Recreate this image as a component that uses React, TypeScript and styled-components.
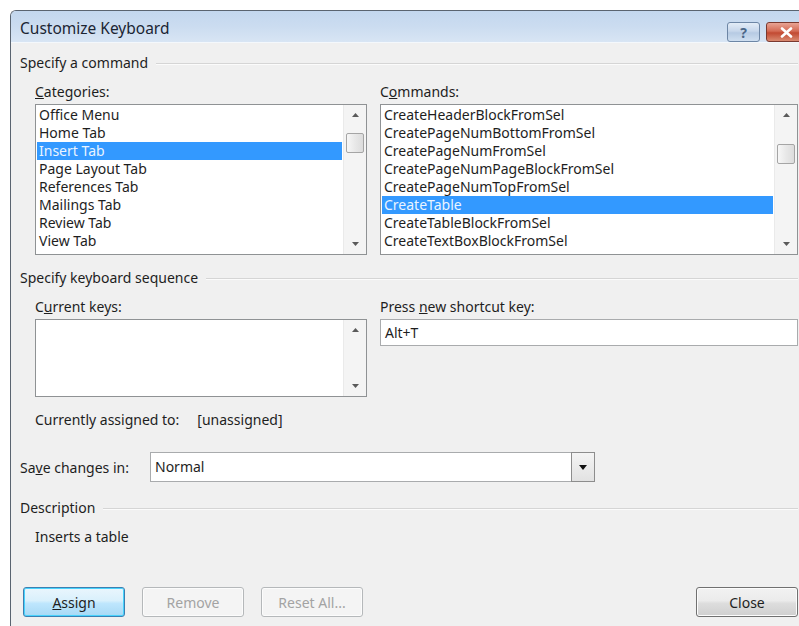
import React from 'react';
import styled, { createGlobalStyle } from 'styled-components';

const GlobalStyle = createGlobalStyle`
  html, body {
    margin: 0;
    padding: 0;
    background: #ffffff;
    overflow: hidden;
  }
  body {
    font-family: "Noto Sans", "Open Sans", sans-serif;
    font-size: 14px;
    color: #1e1e1e;
  }
`;

const Page = styled.div`
  width: 799px;
  height: 626px;
  padding: 10px 0 0 10px;
  box-sizing: border-box;
  overflow: hidden;
`;

const Window = styled.div`
  width: 830px;
  height: 640px;
  border-left: 1px solid #5a6470;
  border-top: 1px solid #5a6470;
  border-top-left-radius: 6px;
  background: #f0f0f0;
  display: flex;
  flex-direction: column;
  overflow: hidden;
`;

const TitleBar = styled.div`
  height: 31px;
  display: flex;
  align-items: center;
  padding-left: 9px;
  background: linear-gradient(to bottom, #c3d7ee 0%, #cbdcf0 50%, #d8e5f4 100%);
  border-bottom: 1px solid #f4f8fc;
  position: relative;
`;

const TitleText = styled.span`
  font-size: 15.5px;
  color: #1b2533;
  padding-top: 2px;
`;

const TitleButtons = styled.div`
  position: absolute;
  left: 716px;
  top: 11px;
  display: flex;
  gap: 6px;
`;

const CaptionButton = styled.div<{ $danger?: boolean }>`
  width: ${(p) => (p.$danger ? '40px' : '33px')};
  height: 20px;
  box-sizing: border-box;
  border: 1px solid ${(p) => (p.$danger ? '#7a3a30' : '#6d86a5')};
  border-radius: 3px;
  display: flex;
  align-items: center;
  justify-content: center;
  color: ${(p) => (p.$danger ? '#ffffff' : '#4b6788')};
  font-weight: bold;
  font-size: 14px;
  background: ${(p) =>
    p.$danger
      ? 'linear-gradient(to bottom, #e8a494 0%, #d46b55 45%, #c24a32 55%, #d98a70 100%)'
      : 'linear-gradient(to bottom, #e3ecf7 0%, #c7d7eb 45%, #b6cae3 55%, #cfdff0 100%)'};
`;

const Content = styled.div`
  flex: 1;
  padding: 10px 0 0 9px;
  width: 778px;
  display: flex;
  flex-direction: column;
`;

const GroupHeader = styled.div`
  display: flex;
  align-items: center;
  gap: 8px;
  height: 19px;
  &::after {
    content: '';
    flex: 1;
    height: 0;
    border-top: 1px solid #d5d5d5;
    border-bottom: 1px solid #fbfbfb;
    margin-top: 2px;
  }
`;

const Indent = styled.div`
  padding-left: 15px;
`;

const Columns = styled.div`
  display: grid;
  grid-template-columns: 332px 418px;
  column-gap: 13px;
`;

const Field = styled.div`
  display: flex;
  flex-direction: column;
`;

const Label = styled.label`
  height: 19px;
  line-height: 19px;
  margin-bottom: 3px;
`;

const ListBox = styled.div<{ $height: number }>`
  height: ${(p) => p.$height}px;
  box-sizing: border-box;
  border: 1px solid #8f9294;
  background: #ffffff;
  display: flex;
`;

const Items = styled.div`
  flex: 1;
  padding: 1px 1px 0 1px;
  overflow: hidden;
`;

const Item = styled.div<{ $selected?: boolean }>`
  height: 18px;
  line-height: 18px;
  padding-left: 2px;
  white-space: nowrap;
  background: ${(p) => (p.$selected ? '#3399ff' : 'transparent')};
  color: ${(p) => (p.$selected ? '#eaf4ff' : '#1e1e1e')};
`;

const ScrollBar = styled.div`
  width: 22px;
  background: #f4f4f4;
  border-left: 1px solid #eaeaea;
  display: flex;
  flex-direction: column;
  align-items: center;
`;

const Arrow = styled.div`
  height: 20px;
  width: 100%;
  display: flex;
  align-items: center;
  justify-content: center;
`;

const Track = styled.div`
  flex: 1;
  width: 100%;
  display: flex;
  flex-direction: column;
  align-items: center;
`;

const Thumb = styled.div<{ $offset: number }>`
  margin-top: ${(p) => p.$offset}px;
  width: 18px;
  height: 20px;
  box-sizing: border-box;
  border: 1px solid #a5a5a5;
  border-radius: 2px;
  background: linear-gradient(to right, #f7f7f7 0%, #e8e8e8 50%, #dcdcdc 100%);
`;

const TextInput = styled.div`
  height: 27px;
  box-sizing: border-box;
  border: 1px solid #a9abad;
  background: #ffffff;
  padding-left: 4px;
  line-height: 25px;
`;

const StatusLine = styled.div`
  margin-top: 13px;
  height: 19px;
  line-height: 19px;
  display: flex;
  gap: 18px;
`;

const SaveRow = styled.div`
  margin-top: 23px;
  display: flex;
  align-items: center;
`;

const SaveLabel = styled.span`
  width: 130px;
`;

const Select = styled.div`
  width: 445px;
  height: 30px;
  box-sizing: border-box;
  border: 1px solid #a9abad;
  background: #ffffff;
  display: flex;
  align-items: stretch;
`;

const SelectValue = styled.div`
  flex: 1;
  padding-left: 4px;
  line-height: 28px;
`;

const DropButton = styled.div`
  width: 24px;
  box-sizing: border-box;
  border: 1px solid #8d8d8d;
  margin: -1px -1px -1px 0;
  background: linear-gradient(to bottom, #f4f4f4 0%, #e2e2e2 100%);
  display: flex;
  align-items: center;
  justify-content: center;
`;

const Description = styled.div`
  margin-top: 10px;
  height: 19px;
  line-height: 19px;
`;

const ButtonRow = styled.div`
  margin-top: 41px;
  display: flex;
  align-items: center;
  gap: 17px;
  padding-left: 3px;
`;

const Button = styled.button<{ $variant?: 'default' | 'disabled' }>`
  width: 102px;
  height: 30px;
  box-sizing: border-box;
  font-family: inherit;
  font-size: 14px;
  border-radius: 3px;
  border: 1px solid
    ${(p) => (p.$variant === 'default' ? '#3c7fb1' : p.$variant === 'disabled' ? '#b5b8ba' : '#707070')};
  color: ${(p) => (p.$variant === 'disabled' ? '#a3a3a3' : '#1e1e1e')};
  background: ${(p) =>
    p.$variant === 'disabled'
      ? '#f4f4f4'
      : p.$variant === 'default'
      ? 'linear-gradient(to bottom, #eaf6fd 0%, #d9f0fc 45%, #bee6fd 55%, #a7d9f5 100%)'
      : 'linear-gradient(to bottom, #f2f2f2 0%, #ebebeb 45%, #dddddd 55%, #cfcfcf 100%)'};
  box-shadow: ${(p) => (p.$variant === 'default' ? 'inset 0 0 0 1px #48d3fd' : 'inset 0 0 0 1px #fcfcfc')};
  padding: 0;
`;

const Spacer = styled.div`
  flex: 1;
`;

const categories = [
  'Office Menu',
  'Home Tab',
  'Insert Tab',
  'Page Layout Tab',
  'References Tab',
  'Mailings Tab',
  'Review Tab',
  'View Tab',
];

const commands = [
  'CreateHeaderBlockFromSel',
  'CreatePageNumBottomFromSel',
  'CreatePageNumFromSel',
  'CreatePageNumPageBlockFromSel',
  'CreatePageNumTopFromSel',
  'CreateTable',
  'CreateTableBlockFromSel',
  'CreateTextBoxBlockFromSel',
];

// small scroll arrow triangle, pointing up or down
const ArrowGlyph = ({ down }: { down?: boolean }) => (
  <svg width="7" height="4" viewBox="0 0 7 4">
    <path d={down ? 'M0 0 H7 L3.5 4 Z' : 'M0 4 H7 L3.5 0 Z'} fill="#5a5a5a" />
  </svg>
);

const Scroll = ({ thumb }: { thumb?: number }) => (
  <ScrollBar>
    <Arrow>
      <ArrowGlyph />
    </Arrow>
    <Track>{thumb !== undefined && <Thumb $offset={thumb} />}</Track>
    <Arrow>
      <ArrowGlyph down />
    </Arrow>
  </ScrollBar>
);

const App = () => (
  <Page>
    <GlobalStyle />
    <Window>
      <TitleBar>
        <TitleText>Customize Keyboard</TitleText>
        <TitleButtons>
          <CaptionButton>?</CaptionButton>
          <CaptionButton $danger>
            <svg width="13" height="11" viewBox="0 0 13 11">
              <path d="M2 1.5 L11 9.5 M11 1.5 L2 9.5" stroke="#ffffff" strokeWidth="2.6" strokeLinecap="round" />
            </svg>
          </CaptionButton>
        </TitleButtons>
      </TitleBar>
      <Content>
        <GroupHeader>Specify a command</GroupHeader>
        <Indent style={{ marginTop: 10 }}>
          <Columns>
            <Field>
              <Label>
                <u>C</u>ategories:
              </Label>
              <ListBox $height={151}>
                <Items>
                  {categories.map((c) => (
                    <Item key={c} $selected={c === 'Insert Tab'}>
                      {c}
                    </Item>
                  ))}
                </Items>
                <Scroll thumb={8} />
              </ListBox>
            </Field>
            <Field>
              <Label>
                C<u>o</u>mmands:
              </Label>
              <ListBox $height={151}>
                <Items>
                  {commands.map((c) => (
                    <Item key={c} $selected={c === 'CreateTable'}>
                      {c}
                    </Item>
                  ))}
                </Items>
                <Scroll thumb={19} />
              </ListBox>
            </Field>
          </Columns>
        </Indent>
        <GroupHeader style={{ marginTop: 13 }}>Specify keyboard sequence</GroupHeader>
        <Indent style={{ marginTop: 10 }}>
          <Columns>
            <Field>
              <Label>
                C<u>u</u>rrent keys:
              </Label>
              <ListBox $height={78}>
                <Items />
                <Scroll />
              </ListBox>
            </Field>
            <Field>
              <Label>
                Press <u>n</u>ew shortcut key:
              </Label>
              <TextInput>Alt+T</TextInput>
            </Field>
          </Columns>
          <StatusLine>
            <span>Currently assigned to:</span>
            <span>[unassigned]</span>
          </StatusLine>
        </Indent>
        <SaveRow>
          <SaveLabel>
            Sa<u>v</u>e changes in:
          </SaveLabel>
          <Select>
            <SelectValue>Normal</SelectValue>
            <DropButton>
              <svg width="8" height="5" viewBox="0 0 8 5">
                <path d="M0 0 H8 L4 5 Z" fill="#111111" />
              </svg>
            </DropButton>
          </Select>
        </SaveRow>
        <GroupHeader style={{ marginTop: 16 }}>Description</GroupHeader>
        <Indent>
          <Description>Inserts a table</Description>
        </Indent>
        <ButtonRow>
          <Button $variant="default">
            <u>A</u>ssign
          </Button>
          <Button $variant="disabled">Remove</Button>
          <Button $variant="disabled">Reset All...</Button>
          <Spacer />
          <Button>Close</Button>
        </ButtonRow>
      </Content>
    </Window>
  </Page>
);

export default App;
